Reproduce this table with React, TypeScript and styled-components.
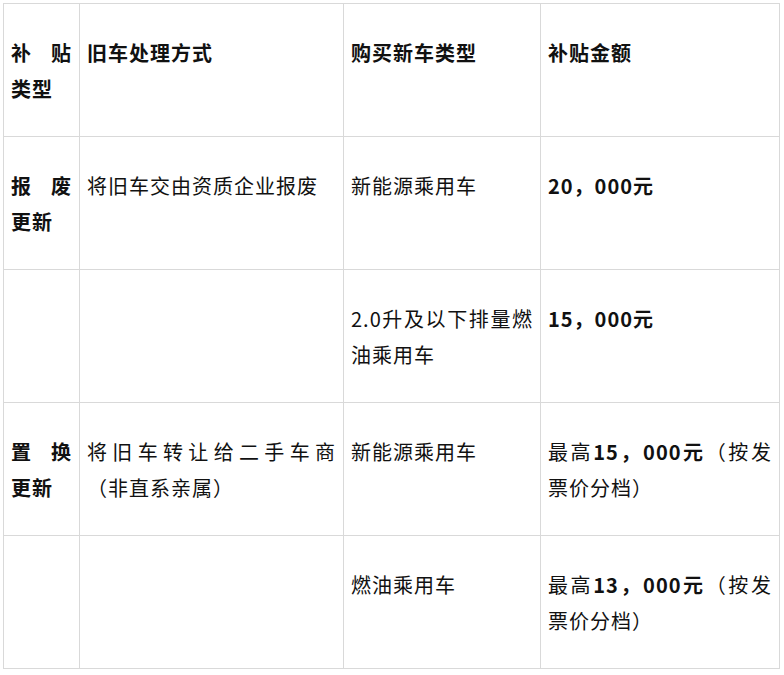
import styled, { createGlobalStyle } from "styled-components";

const GlobalStyle = createGlobalStyle`
  body {
    margin: 0;
    background: #fff;
    font-family: "Noto Sans CJK SC", "Noto Sans", sans-serif;
    color: #111;
  }
`;

type Row = {
  kind: string;
  handling: string;
  newCar: string;
  amount: { prefix?: string; bold: string; suffix?: string };
};

const rows: Row[] = [
  {
    kind: "报废更新",
    handling: "将旧车交由资质企业报废",
    newCar: "新能源乘用车",
    amount: { bold: "20，000元" },
  },
  {
    kind: "",
    handling: "",
    newCar: "2.0升及以下排量燃油乘用车",
    amount: { bold: "15，000元" },
  },
  {
    kind: "置换更新",
    handling: "将旧车转让给二手车商（非直系亲属）",
    newCar: "新能源乘用车",
    amount: { prefix: "最高", bold: "15，000元", suffix: "（按发票价分档）" },
  },
  {
    kind: "",
    handling: "",
    newCar: "燃油乘用车",
    amount: { prefix: "最高", bold: "13，000元", suffix: "（按发票价分档）" },
  },
];

export default function App() {
  return (
    <Page>
      <GlobalStyle />
      <Table>
        <Cell $bold>补贴类型</Cell>
        <Cell $bold>旧车处理方式</Cell>
        <Cell $bold>购买新车类型</Cell>
        <Cell $bold>补贴金额</Cell>
        {rows.map((row, i) => (
          <Row key={i}>
            <Cell $bold>{row.kind}</Cell>
            <Cell>{row.handling}</Cell>
            <Cell>{row.newCar}</Cell>
            <Cell>
              {row.amount.prefix && <span>{row.amount.prefix}</span>}
              <Strong>{row.amount.bold}</Strong>
              {row.amount.suffix && <span>{row.amount.suffix}</span>}
            </Cell>
          </Row>
        ))}
      </Table>
    </Page>
  );
}

const Page = styled.div`
  padding: 3px;
`;

const Table = styled.div`
  display: grid;
  grid-template-columns: 75px 263px 196px 238px;
  grid-auto-rows: 132px;
  gap: 1px;
  padding: 1px;
  width: fit-content;
  background: #d9d9d9;
`;

const Row = styled.div`
  display: contents;
`;

const Cell = styled.div<{ $bold?: boolean }>`
  background: #fff;
  padding: 31px 7px 0;
  font-size: 20px;
  line-height: 36px;
  letter-spacing: 1px;
  text-align: justify;
  font-weight: ${(p) => (p.$bold ? 700 : 400)};
`;

const Strong = styled.strong`
  font-weight: 700;
`;
